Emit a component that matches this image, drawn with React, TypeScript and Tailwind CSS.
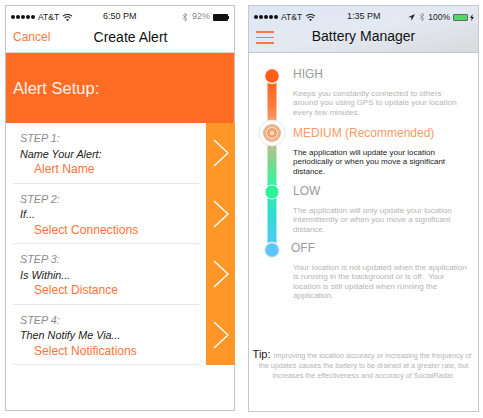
import React from 'react';

const font = { fontFamily: '"Liberation Sans", Arial, sans-serif' };

const steps = [
  { step: 'STEP 1:', prompt: 'Name Your Alert:', action: 'Alert Name' },
  { step: 'STEP 2:', prompt: 'If...', action: 'Select Connections' },
  { step: 'STEP 3:', prompt: 'Is Within...', action: 'Select Distance' },
  { step: 'STEP 4:', prompt: 'Then Notify Me Via...', action: 'Select Notifications' },
];

const levels = [
  {
    title: 'HIGH',
    titleClass: 'text-[#9a9a9a]',
    bodyClass: 'text-[#b4b4b4]',
    body: ['Keeps you constantly connected to others', 'around you using GPS to update your location', 'every few minutes.'],
    className: 'h-[59px]',
  },
  {
    title: 'MEDIUM (Recommended)',
    titleClass: 'text-[#fb9a66]',
    bodyClass: 'text-[#222222]',
    body: ['The application will update your location', 'periodically or when you move a significant', 'distance.'],
    className: 'h-[58px]',
  },
  {
    title: 'LOW',
    titleClass: 'text-[#9a9a9a]',
    bodyClass: 'text-[#b4b4b4]',
    body: ['The application will only update your location', 'intermittently or when you move a significant', 'distance.'],
    className: 'h-[57px]',
  },
  {
    title: 'OFF',
    titleClass: 'text-[#9a9a9a] -ml-0.5',
    bodyClass: 'text-[#b4b4b4]',
    body: ['Your location is not updated when the application', 'is running in the background or is off.  Your', 'location is still updated when running the', 'application.'],
    className: '',
  },
];

const WifiIcon = () => (
  <svg width="11" height="9" viewBox="0 0 11 9" fill="none" stroke="#222" strokeWidth="1.1">
    <path d="M1 3.2C3.8 .8 7.2 .8 10 3.2" />
    <path d="M2.6 5C4.4 3.5 6.6 3.5 8.4 5" />
    <path d="M5.5 8.2L4 6.6C4.9 5.9 6.1 5.9 7 6.6Z" fill="#222" stroke="none" />
  </svg>
);

const BluetoothIcon = () => (
  <svg width="6" height="10" viewBox="0 0 6 10" fill="none" stroke="#9a9a9a" strokeWidth="0.9">
    <path d="M.5 2.8L5 7 3 9V1L5 3 .5 7.2" />
  </svg>
);

const Dots = () => (
  <div className="flex gap-[1px]">
    {[0, 1, 2, 3, 4].map((i) => (
      <span key={i} className="w-1 h-1 rounded-full bg-[#111111]" />
    ))}
  </div>
);

const ChevronIcon = () => (
  <svg width="16" height="28" viewBox="0 0 16 28" fill="none" stroke="#ffffff" strokeWidth="1.4">
    <path d="M1 1L15 14 1 27" />
  </svg>
);

const AlertPhone = () => (
  <div className="w-[230px] h-[406px] border border-[#c4c4c4] bg-white flex flex-col shrink-0">
    <div className="h-[46px] flex flex-col shrink-0">
      <div className="h-5 pl-[5px] pr-[5px] pt-[2px] flex items-center text-[8.5px] text-[#222222]">
        <div className="flex items-center gap-[3px] w-[92px]">
          <Dots />
          <span>AT&amp;T</span>
          <WifiIcon />
        </div>
        <span className="text-[9px] font-medium">6:50 PM</span>
        <div className="ml-auto flex items-center gap-[2px]">
          <BluetoothIcon />
          <span className="text-[#8a8a8a] ml-[2px] text-[9px]">92%</span>
          <div className="w-[15px] h-[7px] bg-[#111111] rounded-[1px] ml-[1px]" />
          <div className="w-[1px] h-[3px] bg-[#111111] -ml-[2px]" />
        </div>
      </div>
      <div className="relative flex-1 flex items-center justify-center">
        <span className="absolute left-[7px] top-[2px] text-[12px] text-[#fa7a3c]">Cancel</span>
        <span className="text-[14px] text-[#111111] mb-[4px] ml-[21px]">Create Alert</span>
      </div>
    </div>
    <div className="h-[71px] bg-[#ff6d25] border-t border-[#d8d8d8] flex items-center pl-[7px] shrink-0">
      <span className="text-[16.5px] text-white/90 pt-[1px]">Alert Setup:</span>
    </div>
    <div className="flex">
      <div className="flex-1 pl-[7px] pr-[7px]">
        {steps.map((s) => (
          <div key={s.step} className="h-[60.5px] border-b border-[#e6e6e6] pl-[7px] pt-[8px] flex flex-col">
            <span className="text-[10.8px] leading-[15.5px] italic text-[#8c8c8c]">{s.step}</span>
            <span className="text-[10.8px] leading-[15.5px] italic text-[#222222]">{s.prompt}</span>
            <span className="text-[12.1px] leading-[15.5px] text-[#ff7338] pl-[14px]">{s.action}</span>
          </div>
        ))}
      </div>
      <div className="w-[29px] bg-[#ff9628] flex flex-col -mr-[1px]">
        {steps.map((s) => (
          <div key={s.step} className="h-[60.5px] flex items-center justify-center">
            <ChevronIcon />
          </div>
        ))}
      </div>
    </div>
  </div>
);

const SliderTrack = () => (
  <svg width="32" height="200" viewBox="0 0 32 200" className="shrink-0">
    <defs>
      <linearGradient id="track" x1="0" y1="0" x2="0" y2="1">
        <stop offset="0" stopColor="#ff5f14" />
        <stop offset="0.17" stopColor="#ff7a3a" />
        <stop offset="0.3" stopColor="#f0b183" />
        <stop offset="0.44" stopColor="#9fc98a" />
        <stop offset="0.6" stopColor="#3cf29c" />
        <stop offset="0.8" stopColor="#2fdcd0" />
        <stop offset="1" stopColor="#5fc4ff" />
      </linearGradient>
    </defs>
    <rect x="11.5" y="14" width="9" height="176" fill="url(#track)" />
    <circle cx="16" cy="15" r="7.5" fill="#ff5f14" stroke="#f3f3f3" strokeWidth="1.5" />
    <circle cx="16" cy="72" r="13" fill="#ffffff" stroke="#e6e6e6" strokeWidth="1" />
    <circle cx="16" cy="72" r="9" fill="#e9b48c" />
    <circle cx="16" cy="72" r="5.5" fill="#f4a06a" stroke="#ffffff" strokeWidth="0.7" />
    <circle cx="16" cy="72" r="2" fill="#ffffff" />
    <circle cx="16" cy="72" r="0.8" fill="#f08040" />
    <circle cx="16" cy="131" r="7" fill="#2cf29a" stroke="#f3f3f3" strokeWidth="1" />
    <circle cx="16" cy="189" r="7.5" fill="#5fc4ff" stroke="#f0f0f0" strokeWidth="1.5" />
  </svg>
);

const BatteryPhone = () => (
  <div className="w-[231px] h-[407px] border border-[#c8c8c8] bg-white flex flex-col shrink-0 ml-[13px]">
    <div className="h-[47px] shrink-0 border-b border-[#c4c8d0] bg-gradient-to-br from-[#dde6f5] via-[#e4eaf3] to-[#d9d9dc] flex flex-col">
      <div className="h-5 pl-[5px] pr-[4px] pt-[2px] flex items-center text-[8.5px] text-[#222222]">
        <div className="flex items-center gap-[3px] w-[93px]">
          <Dots />
          <span>AT&amp;T</span>
          <WifiIcon />
        </div>
        <span className="text-[9px] font-medium">1:35 PM</span>
        <div className="ml-auto flex items-center gap-[2px]">
          <svg width="7" height="7" viewBox="0 0 7 7" className="mr-[2px]">
            <path d="M7 0L0 3.2H3.4V7Z" fill="#222222" />
          </svg>
          <BluetoothIcon />
          <span className="ml-[1px]">100%</span>
          <div className="w-[15px] h-[7px] bg-[#4cd964] border border-[#666666] rounded-[1px] ml-[1px]" />
          <svg width="4" height="7" viewBox="0 0 4 7">
            <path d="M2.6 0L0 4H1.6L1.2 7 4 3H2.3Z" fill="#222222" />
          </svg>
        </div>
      </div>
      <div className="relative flex-1 flex items-center justify-center">
        <div className="absolute left-[7px] top-[5px] w-[18px] flex flex-col gap-[4px]">
          <span className="h-[1.5px] bg-[#fa7a3c]" />
          <span className="h-[1.5px] bg-[#fa7a3c]" />
          <span className="h-[1.5px] bg-[#fa7a3c]" />
        </div>
        <span className="text-[14px] font-medium text-[#111111] mb-[5px]">Battery Manager</span>
      </div>
    </div>
    <div className="flex-1 flex flex-col">
      <div className="flex pt-[8px] pl-[7px]">
        <SliderTrack />
        <div className="flex-1 pl-[5px] pt-[6px] min-w-0">
          {levels.map((l) => (
            <div key={l.title} className={l.className}>
              <div className={`text-[12px] leading-[15px] ${l.titleClass}`}>{l.title}</div>
              <div className={`mt-[7px] text-[8px] leading-[9.4px] whitespace-pre ${l.bodyClass}`}>
                {l.body.map((line) => (
                  <div key={line}>{line}</div>
                ))}
              </div>
            </div>
          ))}
        </div>
      </div>
      <div className="mt-[48px] text-center text-[7.2px] leading-[10px] text-[#b4b4b4] whitespace-pre">
        <div className="-ml-[3px]">
          <span className="text-[11px] text-[#222222]">Tip: </span>
          Improving the location accuracy or increasing the frequency of
        </div>
        <div>the updates causes the battery to be drained at a greater rate, but</div>
        <div>increases the effectiveness and accuracy of SocialRadar.</div>
      </div>
    </div>
  </div>
);

const App: React.FC = () => {
  return (
    <div className="w-[483px] h-[418px] bg-white pl-[5px] pt-[5px] flex items-start overflow-hidden" style={font}>
      <AlertPhone />
      <BatteryPhone />
    </div>
  );
};

export default App;
